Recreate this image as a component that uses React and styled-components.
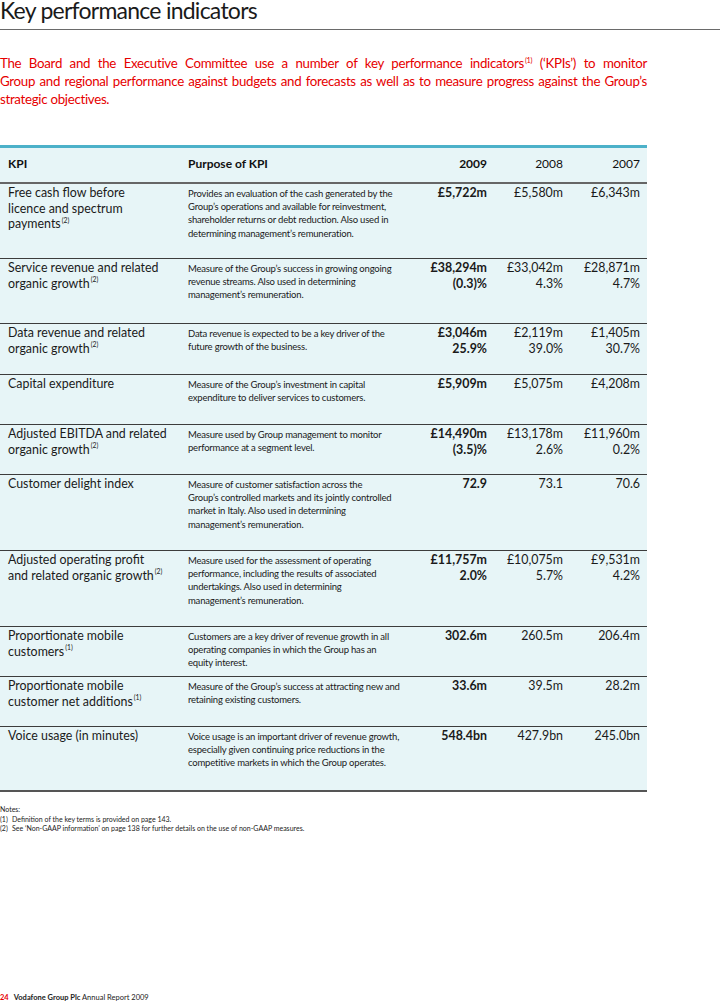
import React from "react";
import styled, { createGlobalStyle } from "styled-components";

const COLORS = {
  red: "#e60000",
  ink: "#1e1e1e",
  teal: "#4cb1c9",
  tint: "#e7f5f7",
  rule: "#3c3c3c",
};

// purpose text is kept in its printed lines so the wrapping matches the report
const ROWS = [
  {
    kpi: ["Free cash flow before", "licence and spectrum", "payments"],
    note: "2",
    purpose: [
      "Provides an evaluation of the cash generated by the",
      "Group’s operations and available for reinvestment,",
      "shareholder returns or debt reduction. Also used in",
      "determining management’s remuneration.",
    ],
    values: [["£5,722m"], ["£5,580m"], ["£6,343m"]],
    height: 75,
  },
  {
    kpi: ["Service revenue and related", "organic growth"],
    note: "2",
    purpose: [
      "Measure of the Group’s success in growing ongoing",
      "revenue streams. Also used in determining",
      "management’s remuneration.",
    ],
    values: [
      ["£38,294m", "(0.3)%"],
      ["£33,042m", "4.3%"],
      ["£28,871m", "4.7%"],
    ],
    height: 65,
  },
  {
    kpi: ["Data revenue and related", "organic growth"],
    note: "2",
    purpose: [
      "Data revenue is expected to be a key driver of the",
      "future growth of the business.",
    ],
    values: [
      ["£3,046m", "25.9%"],
      ["£2,119m", "39.0%"],
      ["£1,405m", "30.7%"],
    ],
    height: 51,
  },
  {
    kpi: ["Capital expenditure"],
    purpose: [
      "Measure of the Group’s investment in capital",
      "expenditure to deliver services to customers.",
    ],
    values: [["£5,909m"], ["£5,075m"], ["£4,208m"]],
    height: 50,
  },
  {
    kpi: ["Adjusted EBITDA and related", "organic growth"],
    note: "2",
    purpose: [
      "Measure used by Group management to monitor",
      "performance at a segment level.",
    ],
    values: [
      ["£14,490m", "(3.5)%"],
      ["£13,178m", "2.6%"],
      ["£11,960m", "0.2%"],
    ],
    height: 50,
  },
  {
    kpi: ["Customer delight index"],
    purpose: [
      "Measure of customer satisfaction across the",
      "Group’s controlled markets and its jointly controlled",
      "market in Italy. Also used in determining",
      "management’s remuneration.",
    ],
    values: [["72.9"], ["73.1"], ["70.6"]],
    height: 76,
  },
  {
    kpi: ["Adjusted operating profit", "and related organic growth"],
    note: "2",
    purpose: [
      "Measure used for the assessment of operating",
      "performance, including the results of associated",
      "undertakings. Also used in determining",
      "management’s remuneration.",
    ],
    values: [
      ["£11,757m", "2.0%"],
      ["£10,075m", "5.7%"],
      ["£9,531m", "4.2%"],
    ],
    height: 76,
  },
  {
    kpi: ["Proportionate mobile", "customers"],
    note: "1",
    purpose: [
      "Customers are a key driver of revenue growth in all",
      "operating companies in which the Group has an",
      "equity interest.",
    ],
    values: [["302.6m"], ["260.5m"], ["206.4m"]],
    height: 50,
  },
  {
    kpi: ["Proportionate mobile", "customer net additions"],
    note: "1",
    purpose: [
      "Measure of the Group’s success at attracting new and",
      "retaining existing customers.",
    ],
    values: [["33.6m"], ["39.5m"], ["28.2m"]],
    height: 50,
  },
  {
    kpi: ["Voice usage (in minutes)"],
    purpose: [
      "Voice usage is an important driver of revenue growth,",
      "especially given continuing price reductions in the",
      "competitive markets in which the Group operates.",
    ],
    values: [["548.4bn"], ["427.9bn"], ["245.0bn"]],
    height: 65,
    last: true,
  },
];

const App = () => {
  return (
    <>
      <GlobalStyle />
      <Page>
        <Title>Key performance indicators</Title>
        <Rule />

        <Intro>
          <IntroLine $justify>
            The Board and the Executive Committee use a number of key
            performance indicators<Sup>(1)</Sup> (‘KPIs’) to monitor
          </IntroLine>
          <IntroLine $justify>
            Group and regional performance against budgets and forecasts as
            well as to measure progress against the Group’s
          </IntroLine>
          <IntroLine>strategic objectives.</IntroLine>
        </Intro>

        <Table>
          <HeadRow>
            <HeadCell>KPI</HeadCell>
            <HeadCell>Purpose of KPI</HeadCell>
            <HeadCell $num $bold>
              2009
            </HeadCell>
            <HeadCell $num>2008</HeadCell>
            <HeadCell $num>2007</HeadCell>
          </HeadRow>

          {ROWS.map((row) => (
            <Row key={row.kpi.join(" ")} $h={row.height} $last={row.last}>
              <KpiCell>
                {row.kpi.map((line, i) => (
                  <div key={line}>
                    {line}
                    {row.note && i === row.kpi.length - 1 && (
                      <Sup>({row.note})</Sup>
                    )}
                  </div>
                ))}
              </KpiCell>
              <Purpose>
                {row.purpose.map((line) => (
                  <div key={line}>{line}</div>
                ))}
              </Purpose>
              {row.values.map((lines, col) => (
                <NumCell key={col} $bold={col === 0}>
                  {lines.map((v) => (
                    <div key={v}>{v}</div>
                  ))}
                </NumCell>
              ))}
            </Row>
          ))}
        </Table>

        <Notes>
          <div>Notes:</div>
          <NoteLine>
            <span>(1)</span>Definition of the key terms is provided on page 143.
          </NoteLine>
          <NoteLine>
            <span>(2)</span>See ‘Non-GAAP information’ on page 138 for further
            details on the use of non-GAAP measures.
          </NoteLine>
        </Notes>

        <Footer>
          <PageNo>24</PageNo>
          <strong>Vodafone Group Plc</strong> Annual Report 2009
        </Footer>
      </Page>
    </>
  );
};

export default App;

const GlobalStyle = createGlobalStyle`
  html, body {
    margin: 0;
    padding: 0;
    background: #fff;
  }
  body {
    font-family: Lato, "Open Sans", sans-serif;
    color: ${COLORS.ink};
  }
`;

const Page = styled.div`
  width: 720px;
  height: 1002px;
  overflow: hidden;
  display: flex;
  flex-direction: column;
`;

const Title = styled.h1`
  margin: -4px 0 0;
  height: 33px;
  font-size: 23px;
  line-height: 28px;
  font-weight: 400;
  letter-spacing: -0.75px;
  color: #1a1a1a;
`;

const Rule = styled.div`
  height: 1px;
  background: #6a6a6a;
`;

const Intro = styled.div`
  margin-top: 24px;
  width: 647px;
  font-size: 13.3px;
  line-height: 18px;
  color: ${COLORS.red};
  letter-spacing: -0.3px;
`;

const IntroLine = styled.div`
  white-space: nowrap;
  text-align: ${(p) => (p.$justify ? "justify" : "left")};
  text-align-last: ${(p) => (p.$justify ? "justify" : "left")};
`;

const Sup = styled.sup`
  font-size: 0.55em;
  line-height: 0;
  vertical-align: 0.75em;
  margin-left: 1px;
`;

const Table = styled.section`
  margin-top: 37px;
  width: 647px;
  background: ${COLORS.tint};
  border-top: 3px solid ${COLORS.teal};
`;

const Grid = styled.div`
  display: grid;
  grid-template-columns: 180px 232px 67px 76px 77px;
  padding: 0 7px 0 8px;
`;

const HeadRow = styled(Grid)`
  height: 30px;
  padding-bottom: 4px;
  align-items: center;
  border-bottom: 2px solid #666;
`;

const HeadCell = styled.div`
  font-size: 12px;
  font-weight: ${(p) => (p.$bold || !p.$num ? 700 : 400)};
  text-align: ${(p) => (p.$num ? "right" : "left")};
  color: #111;
`;

const Row = styled(Grid)`
  height: ${(p) => p.$h}px;
  box-sizing: border-box;
  padding-top: 1px;
  border-bottom: ${(p) =>
    p.$last ? "2px solid #555" : `1px solid ${COLORS.rule}`};
`;

const KpiCell = styled.div`
  font-size: 12.4px;
  line-height: 15.5px;
  color: #1a1a1a;
`;

const Purpose = styled.div`
  padding-top: 2px;
  font-size: 9.5px;
  line-height: 13.2px;
  letter-spacing: -0.2px;
  white-space: nowrap;
  color: #1a1a1a;
`;

const NumCell = styled.div`
  font-size: 12.4px;
  line-height: 16px;
  text-align: right;
  font-weight: ${(p) => (p.$bold ? 700 : 400)};
  color: #1a1a1a;
`;

const Notes = styled.div`
  margin-top: 13px;
  font-size: 7px;
  line-height: 9.5px;
  color: #222;
`;

const NoteLine = styled.div`
  span {
    display: inline-block;
    width: 12px;
  }
`;

const Footer = styled.div`
  margin-top: auto;
  height: 8px;
  font-size: 7.5px;
  line-height: 8px;
  color: #222;

  strong {
    font-weight: 700;
  }
`;

const PageNo = styled.span`
  color: ${COLORS.red};
  font-weight: 700;
  margin-right: 5px;
`;
